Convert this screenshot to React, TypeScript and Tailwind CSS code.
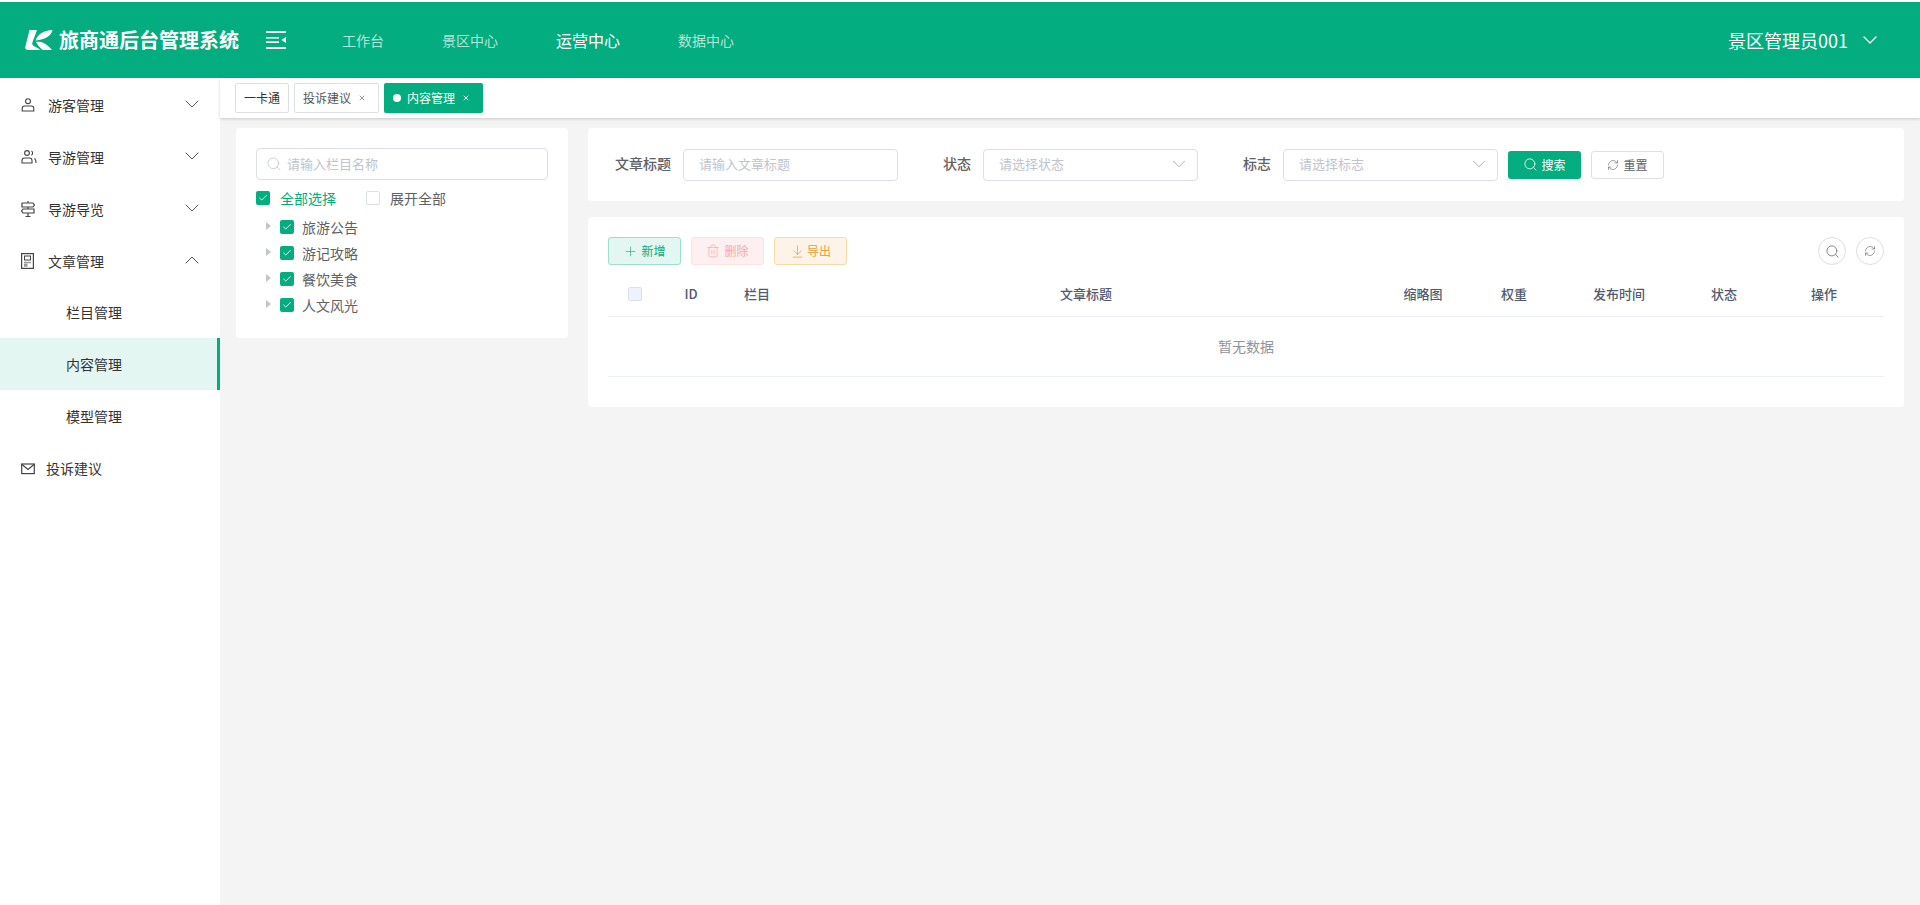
import React from 'react';
import { ChevronDown, ChevronUp, Search, Plus, Trash2, ArrowDownToLine, RefreshCw, Check, X } from 'lucide-react';

const font = { fontFamily: '"Noto Sans CJK SC", sans-serif' };

// logo leaf + K
const Logo = () => (
  <svg width="28" height="22" viewBox="0 0 28 22" fill="white">
    <path d="M4.5 1 H12 L7.4 13.5 C6.9 15.4 7.6 16.6 9.6 17.6 L13.5 19.6 L15 21 L3.2 21 C0.8 21 -0.2 19.4 0.4 17.4 Z" />
    <path d="M10.5 11.5 C12.5 5 19 1.6 27.5 1 C26.5 6.5 20.5 10.8 10.5 11.5 Z" />
    <path d="M11 12.8 C17 12.6 21 14 27 21 L17.5 21 C14.6 18.6 12.4 15.8 11 12.8 Z" />
  </svg>
);

const FoldIcon = () => (
  <svg width="20" height="18" viewBox="0 0 20 18" fill="white">
    <rect x="0" y="0" width="20" height="2" />
    <rect x="0" y="6" width="13" height="1.6" />
    <rect x="0" y="10.4" width="13" height="1.6" />
    <rect x="0" y="16" width="20" height="2" />
    <path d="M20 6 V12 L15.5 9 Z" />
  </svg>
);

const UserIcon = () => (
  <svg width="14" height="14" viewBox="0 0 14 14" fill="none" stroke="#444" strokeWidth="1.1">
    <circle cx="7" cy="3.2" r="2.4" />
    <path d="M1.2 13 V10.4 C1.2 9 2.2 8 3.6 8 H10.4 C11.8 8 12.8 9 12.8 10.4 V13 Z" />
  </svg>
);

const GuideIcon = () => (
  <svg width="16" height="14" viewBox="0 0 16 14" fill="none" stroke="#444" strokeWidth="1.1">
    <circle cx="6" cy="3" r="2.4" />
    <path d="M1 13 V10.4 C1 9 2 8 3.4 8 H8.6 C10 8 11 9 11 10.4 V13 Z" />
    <path d="M10.4 1 C12 1.6 12 4.6 10.4 5.2 M13.4 8.4 C14.6 9 15 10.4 15 13" />
  </svg>
);

const SignIcon = () => (
  <svg width="14" height="16" viewBox="0 0 14 16" fill="none" stroke="#444" strokeWidth="1.2">
    <path d="M7 0 V2 M7 6 V8 M7 12 V15 M4.5 15.5 H9.5" />
    <path d="M2 2 H12 L13.4 4 L12 6 H1 V2.2 Z" />
    <path d="M12 8 H2 L0.6 10 L2 12 H13 V8 Z" />
  </svg>
);

const DocIcon = () => (
  <svg width="13" height="16" viewBox="0 0 13 16" fill="none" stroke="#444">
    <rect x="0.6" y="0.6" width="11.8" height="14.8" strokeWidth="1.2" />
    <rect x="3.5" y="3" width="6" height="4" strokeWidth="1" />
    <path d="M3 9.5 H10 M3 11.5 H6.5 M3 13 H6.5" stroke="#999" strokeWidth="1.3" />
  </svg>
);

const MailIcon = () => (
  <svg width="14" height="12" viewBox="0 0 14 12" fill="none" stroke="#444" strokeWidth="1.2">
    <rect x="0.7" y="1" width="12.6" height="9.6" />
    <path d="M1 1.5 L7 6.5 L13 1.5" />
  </svg>
);

const Box = ({ on = false }: { on?: boolean }) =>
  on ? (
    <span className="flex h-[14px] w-[14px] items-center justify-center rounded-[2px] bg-[#04ad80]">
      <Check size={10} color="white" strokeWidth={2} />
    </span>
  ) : (
    <span className="h-[14px] w-[14px] rounded-[2px] border border-[#dcdfe6] bg-white" />
  );

const menus = [
  { icon: <UserIcon />, label: '游客管理' },
  { icon: <GuideIcon />, label: '导游管理' },
  { icon: <SignIcon />, label: '导游导览' },
];

const subMenus = ['栏目管理', '内容管理', '模型管理'];

const treeNodes = ['旅游公告', '游记攻略', '餐饮美食', '人文风光'];

const columns = ['ID', '栏目', '文章标题', '缩略图', '权重', '发布时间', '状态', '操作'];

const inputCls = 'flex h-8 w-[215px] items-center justify-between rounded-[4px] border border-[#dcdfe6] bg-white pb-[2px] pl-[15px] pr-[15px] text-[13px] text-[#c0c4cc]';

export default function App() {
  return (
    <div className="flex min-h-[905px] flex-col bg-white text-[14px] text-[#333]" style={font}>
      {/* top bar */}
      <div className="mt-[2px] flex h-[76px] items-center bg-[#04ad80] text-white">
        <div className="ml-[25px] flex w-[241px] items-center">
          <Logo />
          <span className="ml-[6px] text-[20px] font-bold leading-none">旅商通后台管理系统</span>
        </div>
        <FoldIcon />
        <div className="ml-[56px] flex items-center text-white/70">
          <span className="w-[100px]">工作台</span>
          <span className="w-[114px]">景区中心</span>
          <span className="w-[122px] text-[16px] text-white">运营中心</span>
          <span>数据中心</span>
        </div>
        <div className="ml-auto mr-[38px] flex items-center">
          <span className="text-[18px]">景区管理员001</span>
          <ChevronDown size={24} strokeWidth={1.3} className="ml-[10px]" />
        </div>
      </div>

      <div className="flex flex-1">
        {/* sidebar */}
        <div className="w-[220px] shrink-0 bg-white">
          {menus.map((m) => (
            <div key={m.label} className="flex h-[52px] items-center pl-[21px] pr-[16px] pt-[2px]">
              <span className="flex w-[27px] justify-start">{m.icon}</span>
              <span className="flex-1">{m.label}</span>
              <ChevronDown size={24} strokeWidth={1} color="#555" className="-mt-[2px]" />
            </div>
          ))}
          <div className="flex h-[52px] items-center pl-[21px] pr-[16px] pt-[2px]">
            <span className="flex w-[27px] justify-start"><DocIcon /></span>
            <span className="flex-1">文章管理</span>
            <ChevronUp size={24} strokeWidth={1} color="#555" className="-mt-[2px]" />
          </div>
          {subMenus.map((s) => (
            <div
              key={s}
              className={
                s === '内容管理'
                  ? 'flex h-[52px] items-center border-r-[3px] border-[#04ad80] bg-[#e4f6f1] pl-[66px] pt-[1px]'
                  : 'flex h-[52px] items-center pl-[66px] pt-[1px]'
              }
            >
              {s}
            </div>
          ))}
          <div className="flex h-[52px] items-center pl-[21px] pt-[1px]">
            <span className="flex w-[25px] justify-start"><MailIcon /></span>
            <span>投诉建议</span>
          </div>
        </div>

        <div className="flex min-w-0 flex-1 flex-col bg-[#f4f4f4]">
          {/* tabs */}
          <div className="flex h-[40px] items-start gap-[5px] bg-white pl-[15px] pt-[5px] text-[12px] shadow-[0_1px_3px_rgba(0,0,0,0.18)]">
            <span className="flex h-[30px] w-[54px] items-center justify-center rounded-[2px] border border-[#dcdfe6]">一卡通</span>
            <span className="flex h-[30px] w-[85px] items-center gap-[7px] rounded-[2px] border border-[#dcdfe6] pl-[8px] text-[#555]">
              投诉建议
              <X size={8} strokeWidth={3} color="#999" />
            </span>
            <span className="flex h-[30px] w-[99px] items-center rounded-[2px] bg-[#04ad80] pl-[9px] text-white">
              <span className="mr-[6px] h-2 w-2 rounded-full bg-white" />
              内容管理
              <X size={8} strokeWidth={3} className="ml-[7px]" />
            </span>
          </div>

          <div className="flex items-start gap-[20px] pl-[16px] pr-[16px] pt-[10px]">
            {/* category tree */}
            <div className="h-[210px] w-[332px] shrink-0 rounded-[4px] bg-white pl-[20px] pr-[20px] pt-[20px] text-[#606266]">
              <div className="flex h-8 items-center rounded-[4px] border border-[#dcdfe6] pl-[9px] text-[13px] text-[#c0c4cc]">
                <Search size={16} strokeWidth={1.2} className="mr-[5px]" />
                请输入栏目名称
              </div>
              <div className="mt-[8px] flex h-[20px] items-center">
                <Box on />
                <span className="ml-[10px] w-[86px] text-[#04ad80]">全部选择</span>
                <Box />
                <span className="ml-[10px]">展开全部</span>
              </div>
              <div className="mt-[6px]">
                {treeNodes.map((n) => (
                  <div key={n} className="flex h-[26px] items-center pl-[10px]">
                    <span className="mb-[3px] mr-[9px] h-0 w-0 border-y-[4px] border-l-[5px] border-y-transparent border-l-[#c0c4cc]" />
                    <Box on />
                    <span className="ml-[8px]">{n}</span>
                  </div>
                ))}
              </div>
            </div>

            <div className="flex min-w-0 flex-1 flex-col gap-[16px]">
              {/* filters */}
              <div className="flex h-[73px] items-center rounded-[4px] bg-white pl-[27px] text-[#606266]">
                <span className="mr-3 pb-[2px] font-medium">文章标题</span>
                <div className={inputCls}>请输入文章标题</div>
                <span className="ml-[45px] mr-3 pb-[2px] font-medium">状态</span>
                <div className={inputCls}>
                  请选择状态
                  <ChevronDown size={22} strokeWidth={1} color="#aaa" className="-mr-[8px]" />
                </div>
                <span className="ml-[45px] mr-3 pb-[2px] font-medium">标志</span>
                <div className={inputCls}>
                  请选择标志
                  <ChevronDown size={22} strokeWidth={1} color="#aaa" className="-mr-[8px]" />
                </div>
                <button className="ml-[10px] flex h-7 w-[73px] items-center justify-center gap-[3px] rounded-[3px] bg-[#04ad80] text-[12px] text-white">
                  <Search size={15} strokeWidth={1.3} />
                  搜索
                </button>
                <button className="ml-[10px] flex h-7 w-[73px] items-center justify-center gap-[4px] rounded-[3px] border border-[#dcdfe6] text-[12px] text-[#606266]">
                  <RefreshCw size={12} strokeWidth={1.2} />
                  重置
                </button>
              </div>

              {/* table card */}
              <div className="h-[190px] rounded-[4px] bg-white pl-[20px] pr-[20px] pt-[20px]">
                <div className="flex h-7 items-center gap-[10px] text-[12px]">
                  <button className="flex h-7 w-[73px] items-center justify-center gap-[3px] rounded-[3px] border border-[#9bdfcd] bg-[#e4f6f1] text-[#04ad80]">
                    <Plus size={15} strokeWidth={1} />
                    新增
                  </button>
                  <button className="flex h-7 w-[73px] items-center justify-center gap-[4px] rounded-[3px] border border-[#fde2e2] bg-[#fef0f0] text-[#f7a7a7]">
                    <Trash2 size={14} strokeWidth={1.2} />
                    删除
                  </button>
                  <button className="flex h-7 w-[73px] items-center justify-center gap-[2px] rounded-[3px] border border-[#f9d9a8] bg-[#fdf3e7] text-[#e6a23c]">
                    <ArrowDownToLine size={15} strokeWidth={1.2} />
                    导出
                  </button>
                  <div className="ml-auto flex gap-[10px] text-[#606266]">
                    <span className="flex h-7 w-7 items-center justify-center rounded-full border border-[#dcdfe6]">
                      <Search size={15} strokeWidth={1.2} />
                    </span>
                    <span className="flex h-7 w-7 items-center justify-center rounded-full border border-[#dcdfe6]">
                      <RefreshCw size={12} strokeWidth={1.2} />
                    </span>
                  </div>
                </div>
                <div className="grid h-[52px] grid-cols-[54px_58px_74px_584px_90px_92px_118px_92px_108px] items-center justify-items-center border-b border-[#ebeef5] pt-[7px] text-[13px] font-medium text-[#515a6e]">
                  <span className="h-[14px] w-[14px] rounded-[2px] border border-[#dcdfe6] bg-[#edf2fc]" />
                  {columns.map((c) => (
                    <span key={c}>{c}</span>
                  ))}
                </div>
                <div className="flex h-[60px] items-center justify-center border-b border-[#ebeef5] text-[#909399]">暂无数据</div>
              </div>
            </div>
          </div>
        </div>
      </div>
    </div>
  );
}
